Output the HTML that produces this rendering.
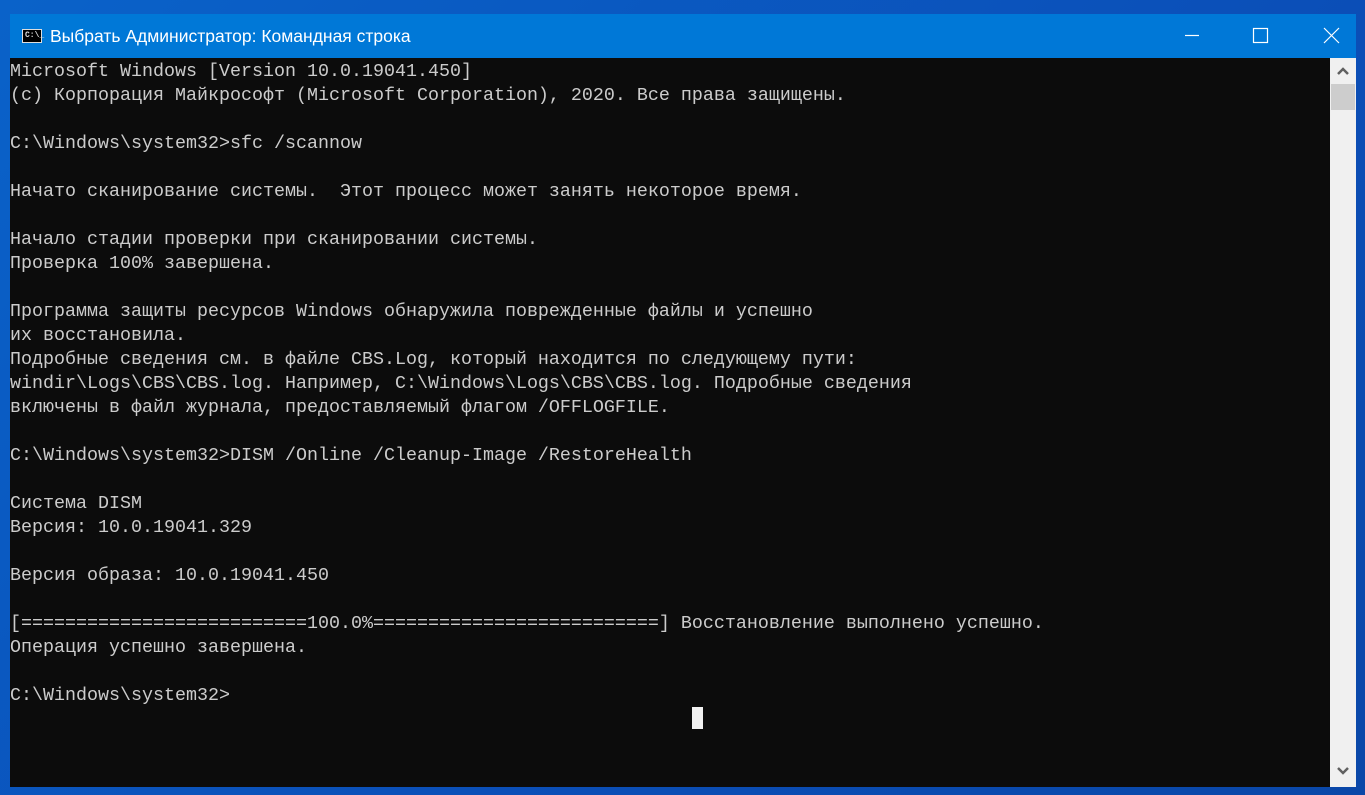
<!DOCTYPE html>
<html><head><meta charset="utf-8"><style>
html,body{margin:0;padding:0;width:1365px;height:795px;overflow:hidden;background:linear-gradient(135deg,#0a62c9,#0b4fb8 60%,#0a47a8);}
.win{position:absolute;left:10px;top:14px;width:1346px;height:773px;background:#0c0c0c;}
.tb{position:absolute;left:0;top:0;width:1346px;height:44px;background:#0078d7;color:#fff;font:17.5px "Liberation Sans",sans-serif;}
.tb .t{position:absolute;left:40px;top:12px;}
.ico{position:absolute;left:12px;top:15px;width:20px;height:14px;background:#000;border:1px solid #ddd;box-sizing:border-box;}
.ico span{position:absolute;left:2px;top:1px;color:#ddd;font:bold 8px "Liberation Mono",monospace;}
pre{position:absolute;left:0;top:46px;margin:0;color:#cccccc;font:18.33px/24px "Liberation Mono",monospace;white-space:pre;}
.sb{position:absolute;left:1320px;top:44px;width:26px;height:729px;background:#f0f0f0;}
.thumb{position:absolute;left:1px;top:26px;width:24px;height:26px;background:#cdcdcd;}
.cur{position:absolute;left:682px;top:693px;width:11px;height:22px;background:#f2f2f2;}
</style></head><body>
<div class="win">
<div class="tb"><div class="ico"><span>C:\_</span></div><div class="t">Выбрать Администратор: Командная строка</div>
<svg style="position:absolute;left:1160px;top:0" width="186" height="44" stroke="#fff" stroke-width="1.2" fill="none">
<line x1="15" y1="21.5" x2="29" y2="21.5"/><rect x="83.5" y="14.5" width="14" height="14"/><path d="M154 14 L169 29 M169 14 L154 29"/></svg></div>
<pre>Microsoft Windows [Version 10.0.19041.450]
(c) Корпорация Майкрософт (Microsoft Corporation), 2020. Все права защищены.

C:\Windows\system32>sfc /scannow

Начато сканирование системы.  Этот процесс может занять некоторое время.

Начало стадии проверки при сканировании системы.
Проверка 100% завершена.

Программа защиты ресурсов Windows обнаружила поврежденные файлы и успешно
их восстановила.
Подробные сведения см. в файле CBS.Log, который находится по следующему пути:
windir\Logs\CBS\CBS.log. Например, C:\Windows\Logs\CBS\CBS.log. Подробные сведения
включены в файл журнала, предоставляемый флагом /OFFLOGFILE.

C:\Windows\system32>DISM /Online /Cleanup-Image /RestoreHealth

Система DISM
Версия: 10.0.19041.329

Версия образа: 10.0.19041.450

[==========================100.0%==========================] Восстановление выполнено успешно.
Операция успешно завершена.

C:\Windows\system32></pre>
<div class="sb"><div class="thumb"></div>
<svg style="position:absolute;left:0;top:0" width="26" height="729" fill="none" stroke="#606060" stroke-width="2.5"><path d="M8 16 L13 11 L18 16"/><path d="M8 710 L13 715 L18 710"/></svg></div>
<div class="cur"></div>
</div>
</body></html>
